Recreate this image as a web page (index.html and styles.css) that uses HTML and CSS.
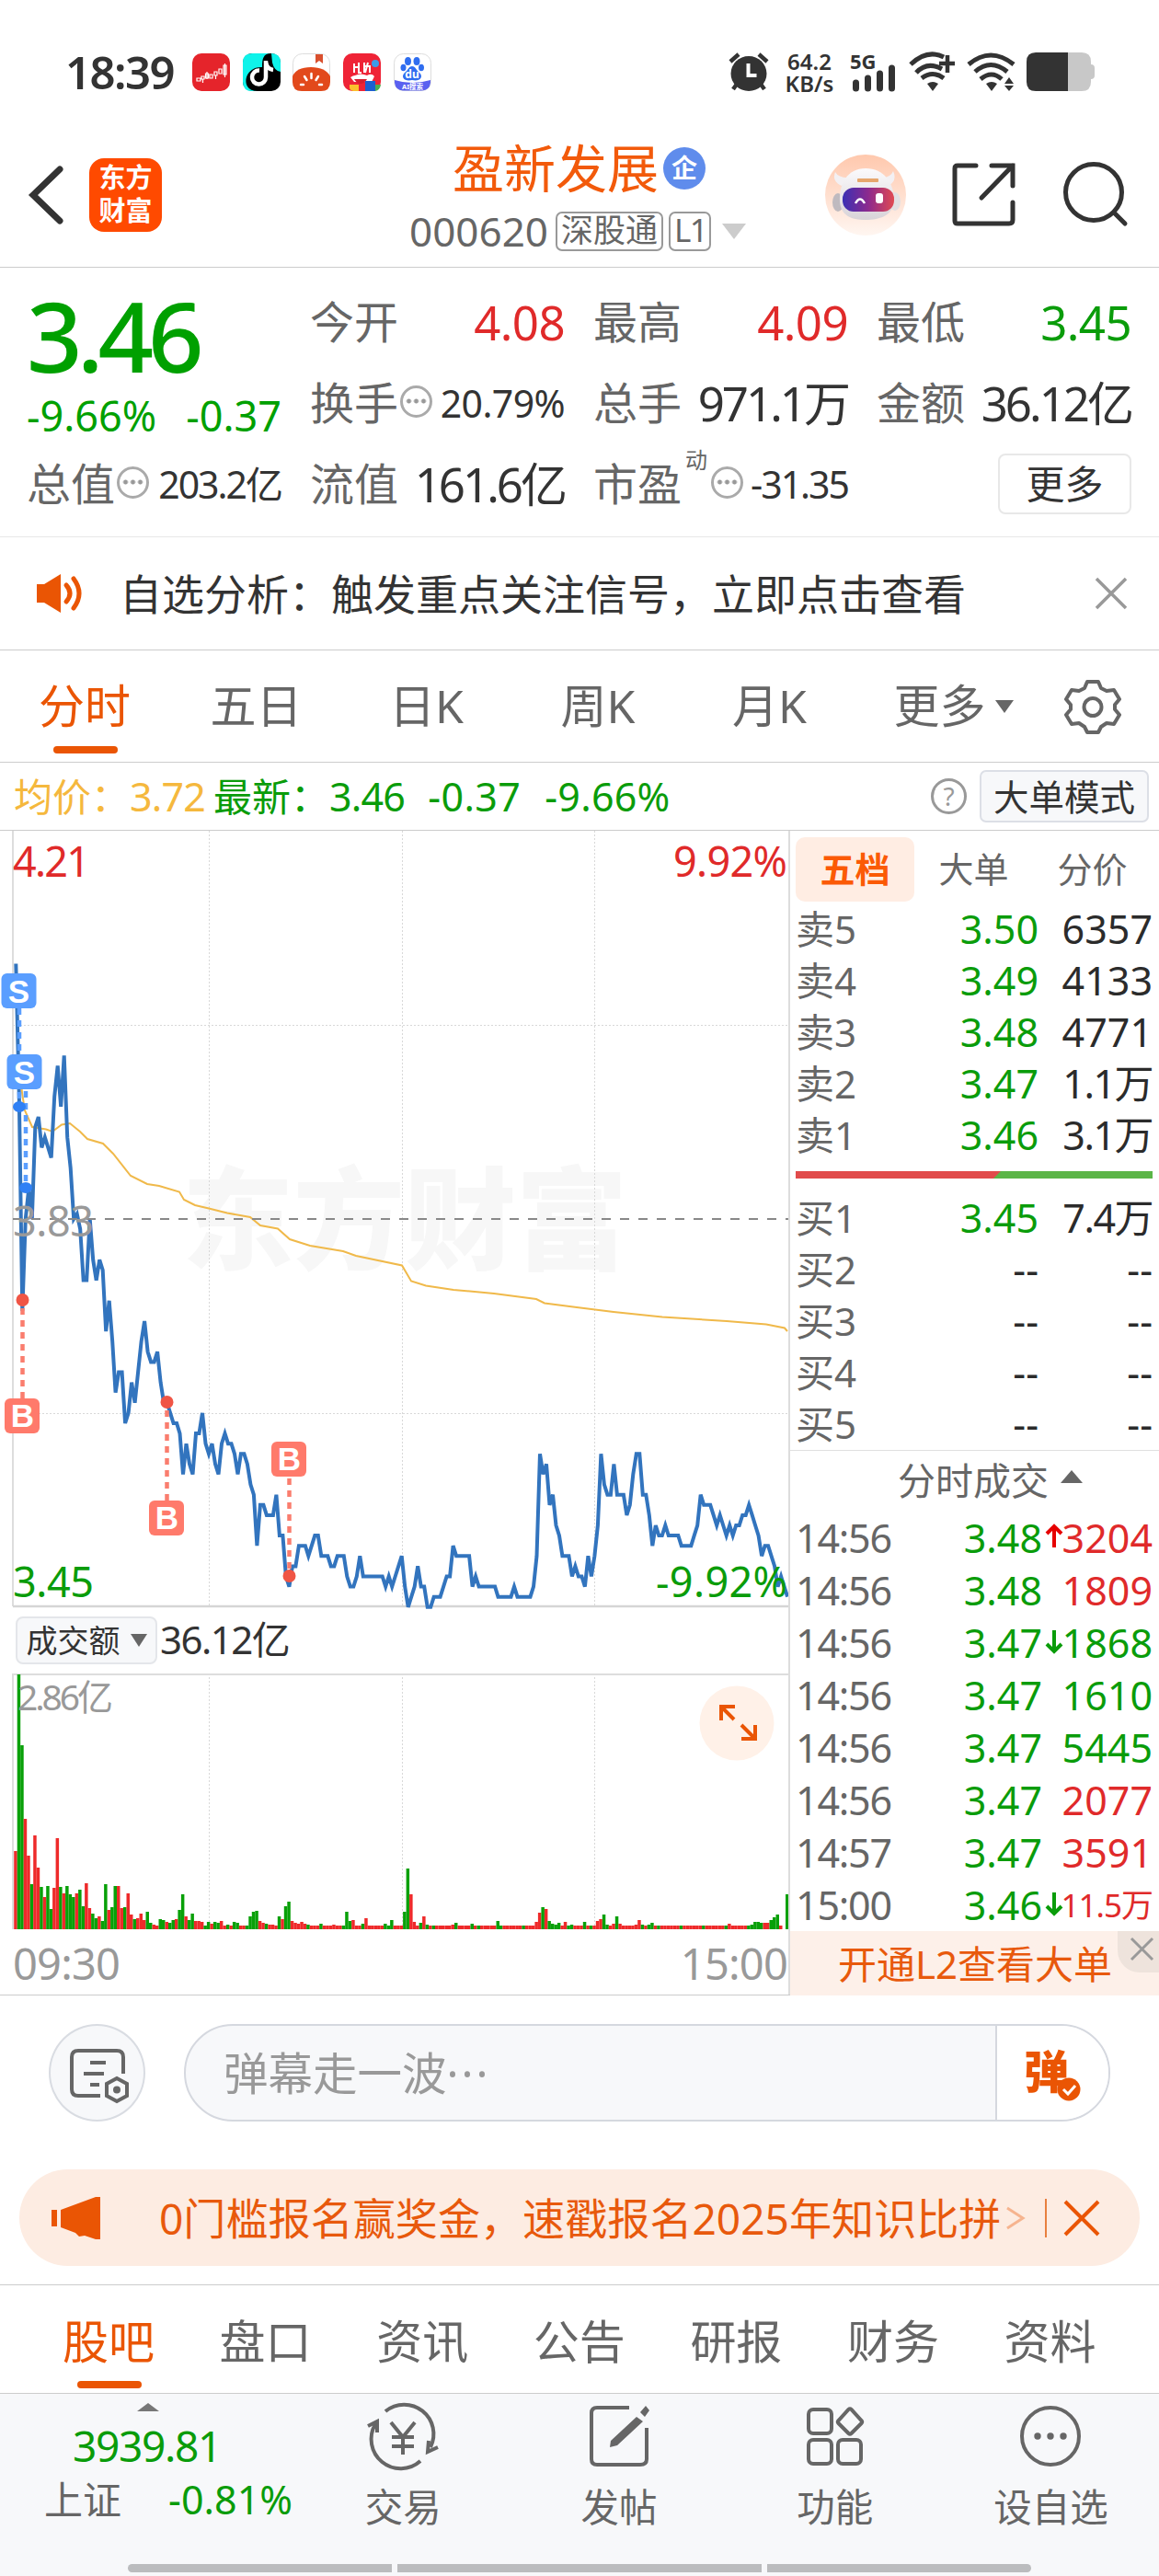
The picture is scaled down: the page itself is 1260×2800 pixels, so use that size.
FILE: index.html
```html
<!DOCTYPE html>
<html lang="zh-CN">

<head>
  <meta charset="UTF-8">
  <meta name="viewport" content="width=device-width, initial-scale=1.0">
  <title>盈新发展 000620</title>
  <link rel="stylesheet" href="styles.css">
</head>

<body>
  <!-- 状态栏 -->
  <div class="status">
    <span class="status_time">18:39</span>
    <div class="status_apps">
      <svg viewBox="0 0 41 41"><rect width="41" height="41" rx="10" fill="#e5242b"/><path d="M5 27h4v3H5zM10 25h3v3h-3zM11.500 28v4M16 20v8M14.500 22h3v5h-3zM19 23h3v4h-3zM24 20h3v4h-3zM25.500 24v4M29 17h3v5h-3zM34 13h3v10h-3zM35.500 11v15" fill="none" stroke="#fff" stroke-width="1.200"/></svg>
      <svg viewBox="0 0 41 41"><rect width="41" height="41" rx="10" fill="#000"/><path d="M10 0h21C22 0 21 6 21 15C8 14 0 26 5 36Q8 41 16 41H10Q0 41 0 31V10Q0 0 10 0zM31 0Q41 0 41 10V20Q34 19 32 10z" fill="#0ff3ea"/><path d="M25 8v18a7.500 7.500 0 1 1-7-7.500M25 9q1 8 8 9" fill="none" stroke="#fff" stroke-width="4.500"/></svg>
      <svg viewBox="0 0 41 41"><rect x=".5" y=".5" width="40" height="40" rx="10" fill="#fff" stroke="#ddd"/><path d="M25 1h8v10l-4-3-4 3z" fill="#d9502e"/><path d="M0 25Q4 15 20 15T41 25V31Q41 41 31 41H10Q0 41 0 31z" fill="#e2491b"/><path d="M20.500 22v5M13 25l2.500 4M28 25l-2.500 4M9 34h3M29 34h3" stroke="#fff" stroke-width="2.500" stroke-linecap="round"/></svg>
      <svg viewBox="0 0 41 41"><rect width="41" height="41" rx="10" fill="#ef2336"/><circle cx="35" cy="11" r="4" fill="#3d9be8"/><path d="M12 11v10M12 15h5M17 10v11h3M23 10v11M22 14h7v7M27 10l-3 11" fill="none" stroke="#fff" stroke-width="2"/><path d="M8 26q3-2 5-2 6-3 13 0 5-3 8 1l-3 6H12z" fill="#fff"/><path d="M12 28h14q-3 5-7 5t-7-5z" fill="#d81e2e"/><path d="M7 34h10v7H11Q7 40 7 37z" fill="#fbc02d"/><path d="M24 30h11v11H24z" fill="#1c5fd0"/><path d="M35 34h6q-1 6-6 7z" fill="#4caf50"/></svg>
      <svg viewBox="0 0 41 41"><rect x=".5" y=".5" width="40" height="40" rx="10" fill="#fff" stroke="#ddd"/><path d="M1 29Q20 35 40 29V32Q39 40 31 40.500H10Q2 40 1 32z" fill="#5a60f0"/><g fill="#2f6df0"><ellipse cx="15.500" cy="8.500" rx="3.500" ry="4.500"/><ellipse cx="25" cy="8.500" rx="3.500" ry="4.500"/><ellipse cx="10.500" cy="15.500" rx="3" ry="3.800"/><ellipse cx="30" cy="15.500" rx="3" ry="3.800"/><path d="M20 14c4 0 4 4 8 7 5 5 0 10-8 8-8 2-13-3-8-8 4-3 4-7 8-7z"/></g><text x="20" y="27" class="du">du</text><text x="20.500" y="38.500" class="du_ai">AI搜索</text></svg>
    </div>
    <div class="status_right">
      <svg class="alarm" viewBox="0 0 44 42"><ellipse cx="22" cy="23" rx="19.500" ry="19" fill="#333"/><path d="M2 10l9-8M42 10l-9-8M5 40l5-7M39 40l-5-7" stroke="#333" stroke-width="4.500"/><path d="M21.500 12v13h9" fill="none" stroke="#fff" stroke-width="4"/></svg>
      <span class="speed">64.2<br>KB/s</span>
      <svg class="signal" viewBox="0 0 52 42"><text x="0" y="18">5G</text><path d="M6.500 33v6M19.500 28v11M32.500 23v16M45.500 17v22" stroke="#333" stroke-width="7" stroke-linecap="round"/></svg>
      <svg class="wifi" viewBox="0 0 51 42"><path d="M2 13Q20-4 38 5M8 22Q20 9 36 18M14 28Q26 19 38 28" fill="none" stroke="#333" stroke-width="5"/><path d="M20 34q6-4 12 0l-6 8z" fill="#333"/><path d="M42 3v19M33 12h17" stroke="#333" stroke-width="4.500"/></svg>
      <svg class="wifi" viewBox="0 0 51 42"><path d="M1 13Q25-7 50 13M8 21Q25 6 43 21M14 29Q26 19 37 29" fill="none" stroke="#333" stroke-width="5"/><path d="M20 34q6-4 12 0l-6 8zM45 27l5 7H40zM45 42l5-6H40z" fill="#333"/></svg>
      <svg class="battery" viewBox="0 0 74 42"><path d="M45 0H60q10 0 10 10v3q4 0 4 4v8q0 4-4 4v3q0 10-10 10H45z" fill="#c8c8c8"/><path d="M45 0v42H10Q0 42 0 32V10Q0 0 10 0z" fill="#333"/></svg>
    </div>
  </div>

  <!-- 标题栏 -->
  <div class="header">
    <svg class="back" viewBox="0 0 38 64"><path d="M34 4L5 32l29 28" fill="none" stroke="#333" stroke-width="7" stroke-linecap="round"/></svg>
    <div class="logo">东方<br>财富</div>
    <div class="title_box">
      <div class="title">盈新发展<span class="qi">企</span></div>
      <div class="code"><span>000620</span><span class="tag">深股通</span><span class="tag tag_l1">L1</span><svg viewBox="0 0 26 17"><path d="M0 0h26L13 17z" fill="#ccc"/></svg></div>
    </div>
    <svg class="robot" viewBox="0 0 88 88">
      <defs>
        <linearGradient id="halo" x1="0" y1="0" x2="0" y2="1"><stop offset="0" stop-color="#ffc8ad"/><stop offset="1" stop-color="#fff6f1"/></linearGradient>
        <linearGradient id="visor"><stop offset="0" stop-color="#3a2fb4"/><stop offset=".5" stop-color="#8d2a8e"/><stop offset="1" stop-color="#e04a52"/></linearGradient>
        <linearGradient id="head" x1="0" y1="0" x2="0" y2="1"><stop offset="0" stop-color="#fbfafc"/><stop offset="1" stop-color="#d8d3d8"/></linearGradient>
      </defs>
      <circle cx="44" cy="44" r="44" fill="url(#halo)"/>
      <ellipse cx="14" cy="52" rx="6" ry="10" fill="#bfbabf"/><ellipse cx="76" cy="51" rx="6" ry="10" fill="#e2dfe2"/>
      <path d="M11 19q-4 10 7 15l9-9q-12 1-16-6zM74 18q5 11-6 16l-9-9q12 1 15-7z" fill="#f3f0f3"/>
      <path d="M44 15c20 0 31 16 31 35-1 16-15 21-31 21S17 66 16 51C15 32 24 15 44 15z" fill="url(#head)"/>
      <rect x="35" y="26" width="23" height="4" rx="1" fill="#e6a66d"/>
      <rect x="19" y="36" width="56" height="26" rx="12" fill="url(#visor)"/>
      <path d="M33 53q5-9 10 0" fill="none" stroke="#fff" stroke-width="2.500"/><rect x="55" y="42" width="8" height="11" rx="3" fill="#fff"/>
    </svg>
    <svg class="share" viewBox="0 0 69 69"><path d="M26 3H6Q3 3 3 6V63Q3 66 6 66H62Q66 66 66 62V43M43 3H66V25M66 3L32 38" fill="none" stroke="#333" stroke-width="5" stroke-linecap="round"/></svg>
    <svg class="search" viewBox="0 0 70 70"><circle cx="33" cy="33" r="30.500" fill="none" stroke="#333" stroke-width="5"/><path d="M55 55l12 12" stroke="#333" stroke-width="5" stroke-linecap="round"/></svg>
  </div>

  <!-- 行情 -->
  <div class="quote">
    <div class="price_box">
      <div class="price">3.46</div>
      <div class="change"><span>-9.66%</span><span>-0.37</span></div>
    </div>
    <div class="cell"><span>今开</span><b class="red">4.08</b></div>
    <div class="cell"><span>最高</span><b class="red">4.09</b></div>
    <div class="cell"><span>最低</span><b class="green">3.45</b></div>
    <div class="cell"><span>换手<i class="dots"></i></span><b class="small">20.79%</b></div>
    <div class="cell"><span>总手</span><b class="tight">971.1万</b></div>
    <div class="cell"><span>金额</span><b class="tight">36.12亿</b></div>
    <div class="cell"><span>总值<i class="dots"></i></span><b class="small tight">203.2亿</b></div>
    <div class="cell"><span>流值</span><b class="tight">161.6亿</b></div>
    <div class="cell"><span>市盈<sup>动</sup><i class="dots"></i></span><b class="small tight">-31.35</b></div>
    <div class="cell"><button class="more_btn" type="button">更多</button></div>
  </div>

  <div class="notice">
    <svg class="speaker" viewBox="0 0 50 46"><path d="M0 13h8L26 2v42L8 33H0z" fill="#ea5504"/><path d="M32 14q8 9 0 18M40 7q12 16 0 32" fill="none" stroke="#ea5504" stroke-width="5" stroke-linecap="round"/></svg>
    <span>自选分析：触发重点关注信号，立即点击查看</span>
    <svg class="close" viewBox="0 0 34 34"><path d="M1 1l32 32M33 1L1 33" stroke="#999" stroke-width="3.500"/></svg>
  </div>

  <div class="tabs">
    <a class="active" href="#">分时</a>
    <a href="#">五日</a>
    <a href="#">日K</a>
    <a href="#">周K</a>
    <a href="#">月K</a>
    <a href="#" class="tab_more">更多<svg viewBox="0 0 20 14"><path d="M0 0h20L10 14z" fill="#666"/></svg></a>
    <svg class="gear" viewBox="0 0 60 60"><path d="M24 3h12l3 7 6 3 8-1 6 10-5 6v5l5 6-6 10-8-1-6 4-3 6H24l-3-6-6-4-8 1-6-10 5-6v-5l-5-6 6-10 8 1 6-3z" fill="none" stroke="#666" stroke-width="4" stroke-linejoin="round"/><circle cx="30" cy="30.500" r="9.500" fill="none" stroke="#666" stroke-width="4"/></svg>
  </div>

  <div class="info">
    <span class="avg">均价：<em>3.72</em></span>
    <span class="green">最新：<em>3.46</em></span>
    <em class="green info_diff">-0.37</em>
    <em class="green info_pct">-9.66%</em>
    <span class="help">?</span>
    <button class="mode_btn" type="button">大单模式</button>
  </div>

  <div class="main">
    <div class="left">
      <svg class="chart" viewBox="0 0 857 845">
        <g class="watermark"><text x="198" y="467" textLength="484">东方财富</text></g>
        <path d="M227.500 0V843M437.500 0V843M646.500 0V843M14 211.500H857M14 633.500H857" class="grid"/>
        <path d="M14 0V843" stroke="#ddd" stroke-width="2"/>
        <path d="M14 843H857" stroke="#d5d5d5" stroke-width="2.500"/>
        <polyline class="avg_line" points="21,250 24,285 27,304 35,322 50,324.500 57,327 67,319.500 76,318 87,327 95,335 112,340 123,351 142,375 160,384 173,386 195,392.500 200,401 212,407 227,410.500 247,415.500 272,420 283,429 302,432.500 315,444 337,451 373,457 387,462 437,472.500 447,489.500 463,494.500 493,499 537,503 583,509 592,513.500 627,518 667,523 720,528.500 790,533 833,536.500 853,540.500 856,544"/>
        <polyline class="price_line" id="priceLine"/>
        <path d="M14 422H857" stroke="#888" stroke-width="2" stroke-dasharray="10 10"/>
        <text x="14" y="50" class="red" textLength="84">4.21</text>
        <text x="856" y="50" class="red end" textLength="124">9.92%</text>
        <text x="14" y="441" class="gray" textLength="88">3.83</text>
        <text x="14" y="833" class="green" textLength="88">3.45</text>
        <text x="856" y="833" class="green end" textLength="143">-9.92%</text>
        <!-- 买卖点 -->
        <g class="sell">
          <path d="M21 193V300M28 283V388"/>
          <ellipse cx="21" cy="300" rx="7" ry="6"/><ellipse cx="28" cy="388" rx="7" ry="6"/>
          <rect x="1.500" y="155" width="38" height="38" rx="6"/><text x="20.500" y="187">S</text>
          <rect x="7.500" y="243" width="38" height="38" rx="6"/><text x="26.500" y="275">S</text>
        </g>
        <g class="buy">
          <path d="M24.500 617V510M181.500 728V621M314.500 704V810"/>
          <ellipse cx="24.500" cy="510" rx="7" ry="7"/><ellipse cx="181.500" cy="621" rx="7" ry="7"/><ellipse cx="314.500" cy="810" rx="7" ry="7"/>
          <rect x="5" y="617" width="38" height="38" rx="6"/><text x="24.500" y="648">B</text>
          <rect x="162" y="728" width="38" height="38" rx="6"/><text x="181.500" y="759">B</text>
          <rect x="295" y="664" width="38" height="38" rx="6"/><text x="314.500" y="695">B</text>
        </g>
      </svg>
      <div class="vol_head">
        <button class="vol_btn" type="button">成交额<svg viewBox="0 0 18 14"><path d="M0 0h18L9 14z" fill="#666"/></svg></button>
        <span>36.12亿</span>
      </div>
      <svg class="volume" viewBox="0 0 857 279">
        <path d="M227.500 0V278M437.500 0V278M646.500 0V278" class="grid"/>
        <path d="M14 278V1H857" fill="none" stroke="#ddd" stroke-width="2"/>
        <g id="bars"></g>
        <text x="19" y="40" textLength="104">2.86亿</text>
        <circle cx="801" cy="54" r="40.500" fill="#fff1e8"/>
        <path d="M784 51V36H799M784 36L798 50M821 56V71H806M821 71L806 56" fill="none" stroke="#ea5504" stroke-width="4"/>
      </svg>
      <div class="axis"><span>09:30</span><span>15:00</span></div>
    </div>

    <div class="right">
      <div class="sub_tabs">
        <a class="active" href="#">五档</a>
        <a href="#">大单</a>
        <a href="#">分价</a>
      </div>
      <div class="orders">
        <div class="row"><span>卖5</span><span class="green">3.50</span><span>6357</span></div>
        <div class="row"><span>卖4</span><span class="green">3.49</span><span>4133</span></div>
        <div class="row"><span>卖3</span><span class="green">3.48</span><span>4771</span></div>
        <div class="row"><span>卖2</span><span class="green">3.47</span><span class="wan">1.1万</span></div>
        <div class="row"><span>卖1</span><span class="green">3.46</span><span class="wan">3.1万</span></div>
      </div>
      <div class="ratio"></div>
      <div class="orders">
        <div class="row"><span>买1</span><span class="green">3.45</span><span class="wan">7.4万</span></div>
        <div class="row"><span>买2</span><span>--</span><span>--</span></div>
        <div class="row"><span>买3</span><span>--</span><span>--</span></div>
        <div class="row"><span>买4</span><span>--</span><span>--</span></div>
        <div class="row"><span>买5</span><span>--</span><span>--</span></div>
      </div>
      <div class="deal_title">分时成交<svg viewBox="0 0 24 14"><path d="M12 0l12 14H0z" fill="#666"/></svg></div>
      <div class="deals">
        <div class="row"><span>14:56</span><span class="green">3.48</span><svg viewBox="0 0 20 28"><path d="M10 26V3M2 11l8-8 8 8" fill="none" stroke="#e60000" stroke-width="4"/></svg><span class="red">3204</span></div>
        <div class="row"><span>14:56</span><span class="green">3.48</span><span class="red">1809</span></div>
        <div class="row"><span>14:56</span><span class="green">3.47</span><svg viewBox="0 0 20 28"><path d="M10 2v23M2 17l8 8 8-8" fill="none" stroke="#0a9c0a" stroke-width="4"/></svg><span class="green">1868</span></div>
        <div class="row"><span>14:56</span><span class="green">3.47</span><span class="green">1610</span></div>
        <div class="row"><span>14:56</span><span class="green">3.47</span><span class="green">5445</span></div>
        <div class="row"><span>14:56</span><span class="green">3.47</span><span class="red">2077</span></div>
        <div class="row"><span>14:57</span><span class="green">3.47</span><span class="red">3591</span></div>
        <div class="row"><span>15:00</span><span class="green">3.46</span><svg viewBox="0 0 20 28"><path d="M10 2v23M2 17l8 8 8-8" fill="none" stroke="#0a9c0a" stroke-width="4"/></svg><span class="red narrow">11.5万</span></div>
      </div>
      <div class="l2">开通L2查看大单<span class="l2_close"><svg viewBox="0 0 25 25"><path d="M1 1l23 23M24 1L1 24" stroke="#999" stroke-width="3"/></svg></span></div>
    </div>
  </div>

  <!-- 弹幕 -->
  <div class="danmu">
    <span class="danmu_set">
      <svg viewBox="0 0 66 60"><path d="M59 28V10Q59 3 52 3H10Q3 3 3 10V45Q3 52 10 52H34" fill="none" stroke="#666" stroke-width="4"/><path d="M23 16h17M16 28h22M23 40h10" stroke="#666" stroke-width="4"/><path d="M52 33l11 6v13l-11 6-11-6V39z" fill="none" stroke="#666" stroke-width="4"/><circle cx="52" cy="45.500" r="4" fill="#666"/></svg>
    </span>
    <div class="danmu_input">
      <span class="placeholder">弹幕走一波<i>···</i></span>
      <span class="danmu_btn">弹<svg viewBox="0 0 26 26"><circle cx="13" cy="13" r="12.500" fill="#ea5504"/><path d="M7 13l5 5 8-9" fill="none" stroke="#fff" stroke-width="3"/></svg></span>
    </div>
  </div>

  <div class="banner">
    <svg class="horn" viewBox="0 0 54 46"><path d="M0 14h6v18H0zM10 14L48 0h5v46h-5l-12-4-6 1-4-4-16-6z" fill="#ea5504"/></svg>
    <span class="banner_text">0门槛报名赢奖金，速戳报名2025年知识比拼</span>
    <svg class="chevron" viewBox="0 0 20 26"><path d="M1 2l17 11L1 24" fill="none" stroke="#f6b48f" stroke-width="3"/></svg>
    <svg class="banner_close" viewBox="0 0 38 38"><path d="M1 1l36 36M37 1L1 37" stroke="#ea5504" stroke-width="4"/></svg>
  </div>

  <div class="bottom_tabs">
    <a class="active" href="#">股吧</a>
    <a href="#">盘口</a>
    <a href="#">资讯</a>
    <a href="#">公告</a>
    <a href="#">研报</a>
    <a href="#">财务</a>
    <a href="#">资料</a>
  </div>

  <!-- 底部导航 -->
  <div class="nav">
    <div class="index">
      <svg viewBox="0 0 24 9"><path d="M12 0l12 9H0z" fill="#777"/></svg>
      <div class="index_value">3939.81</div>
      <div class="index_row"><span>上证</span><span class="green">-0.81%</span></div>
    </div>
    <a href="#"><svg viewBox="0 0 78 70"><path d="M20 8A32 32 0 0 1 69 47M58 62A32 32 0 0 1 9 22" fill="none" stroke="#666" stroke-width="4"/><path d="M1 24l10-5 0 12M77 47l-11 5 1-12M26 20l13 16 13-16M39 36v19M27 36h24M27 46h24" fill="none" stroke="#666" stroke-width="4"/></svg>交易</a>
    <a href="#"><svg viewBox="0 0 78 70"><path d="M50 4H15Q9 4 9 10V60Q9 66 15 66H62Q69 66 69 60V26" fill="none" stroke="#666" stroke-width="4"/><path d="M62 9l6-7 4 5-5 7zM58 14l7 5-28 26-8 2 1-7z" fill="#666"/></svg>发帖</a>
    <a href="#"><svg viewBox="0 0 78 70"><g fill="none" stroke="#666" stroke-width="4"><rect x="10" y="6" width="25" height="26" rx="5"/><rect x="10" y="39" width="25" height="26" rx="5"/><rect x="42" y="39" width="25" height="26" rx="5"/><path d="M53.500 6q1.500-1.500 3 0l11 12q1.500 1.500 0 3l-11 11q-1.500 1.500-3 0l-11-11q-1.500-1.500 0-3z"/></g></svg>功能</a>
    <a href="#"><svg viewBox="0 0 78 70"><circle cx="39" cy="35" r="31" fill="none" stroke="#666" stroke-width="4"/><g fill="#666"><circle cx="25" cy="35" r="3.700"/><circle cx="39" cy="35" r="3.700"/><circle cx="53" cy="35" r="3.700"/></g></svg>设自选</a>
  </div>
  <div class="home_bar"><i></i><i></i><i></i></div>

  <script src="chart.js"></script>
</body>

</html>
```
FILE: styles.css
```css
/* 基本样式 */
* {
  box-sizing: border-box;
}

body {
  width: 1260px;
  height: 2800px;
  margin: 0;
  overflow: hidden;
  background-color: #fff;
  color: #333;
  font-family: "Noto Sans", "Noto Sans CJK SC", sans-serif;
  font-size: 44px;
}

a {
  color: #666;
  text-decoration: none;
}

b,
em,
i {
  font-weight: normal;
  font-style: normal;
}

svg {
  display: block;
  flex-shrink: 0;
  overflow: visible;
}

button {
  font-family: inherit;
  color: #333;
  padding: 0;
}

.red {
  color: #e02a2a;
  fill: #e02a2a;
}

.green {
  color: #0a9c0a;
  fill: #0a9c0a;
}

.gray {
  fill: #999;
}

/* 状态栏 */
.status {
  height: 140px;
  padding: 57px 70px 0 71px;
  display: flex;
}

.status_time {
  width: 138px;
  line-height: 42px;
  font-size: 49px;
  font-weight: 600;
  letter-spacing: -1.5px;
}

.status_apps {
  display: flex;
  gap: 13.7px;
}

.status_apps svg {
  width: 41px;
  height: 41px;
  margin-top: 1px;
}

.du {
  font-size: 12px;
  font-weight: bold;
  fill: #fff;
  text-anchor: middle;
}

.du_ai {
  font-size: 7.5px;
  font-weight: bold;
  fill: #fff;
  text-anchor: middle;
}

.status_right {
  display: flex;
  margin-left: auto;
}

.alarm {
  width: 44px;
  height: 42px;
}

.speed {
  width: 56px;
  margin: -2px 16px 0 16px;
  font-size: 24px;
  line-height: 24px;
  font-weight: 600;
  text-align: center;
  white-space: nowrap;
}

.signal {
  width: 52px;
  height: 42px;
  margin-right: 12px;
}

.signal text {
  font-size: 22px;
  font-weight: bold;
  fill: #333;
}

.wifi {
  width: 51px;
  height: 42px;
  margin-right: 13px;
}

.battery {
  width: 74px;
  height: 42px;
}

/* 标题栏 */
.header {
  height: 151px;
  border-bottom: 1px solid #ccc;
  padding-left: 31px;
  display: flex;
  align-items: flex-start;
}

.back {
  width: 38px;
  height: 64px;
  margin-top: 40px;
}

.logo {
  width: 79px;
  height: 80px;
  margin: 32px 0 0 28px;
  padding-top: 3px;
  border-radius: 16px;
  background-color: #ff4a00;
  color: #fff;
  font-size: 29px;
  line-height: 36px;
  font-weight: bold;
  text-align: center;
}

.title_box {
  width: 560px;
  margin-left: 170px;
  padding-left: 99px;
}

.title {
  display: flex;
  align-items: center;
  margin: 7px 0 0 47px;
  height: 70px;
  line-height: 70px;
  font-size: 56px;
  color: #f25a0b;
}

.qi {
  width: 46px;
  height: 46px;
  margin: 2px 0 0 5px;
  border-radius: 50%;
  background-color: #5f8cec;
  color: #fff;
  font-size: 28px;
  line-height: 44px;
  font-weight: bold;
  text-align: center;
}

.code {
  display: flex;
  align-items: center;
  height: 44px;
  margin-top: 12px;
  line-height: 42px;
  color: #666;
}

.tag {
  height: 43px;
  margin-left: 6px;
  padding: 0 4px;
  border: 2px solid #999;
  border-radius: 7px;
  font-size: 35px;
  line-height: 36px;
}

.code .tag_l1 {
  width: 46px;
  letter-spacing: -1.5px;
}

.code span:first-child {
  width: 153px;
}

.code svg {
  width: 26px;
  margin-left: 12px;
}

.robot {
  width: 88px;
  height: 88px;
  margin: 28px 0 0 -9px;
}

.share {
  width: 69px;
  height: 69px;
  margin: 37px 0 0 50px;
}

.search {
  width: 70px;
  height: 70px;
  margin: 36px 0 0 52px;
}

/* 行情 */
.quote {
  height: 293px;
  padding: 15px 28px 0 29px;
  border-bottom: 1px solid #e8e8e8;
  display: grid;
  grid-template-columns: repeat(4, 277px);
  grid-template-rows: repeat(3, 88px);
  column-gap: 31px;
}

.price_box {
  grid-row: span 2;
  color: #00a000;
}

.price {
  margin-top: 3px;
  font-size: 106px;
  line-height: 110px;
  font-weight: 500;
  letter-spacing: -6px;
}

.change {
  display: flex;
  justify-content: space-between;
  margin-top: 3px;
  font-size: 45px;
  line-height: 60px;
}

.cell {
  display: flex;
  align-items: center;
  justify-content: space-between;
  line-height: 60px;
  white-space: nowrap;
}

.cell span {
  display: flex;
  align-items: center;
  font-size: 48px;
  color: #666;
}

.cell b {
  font-size: 51px;
  letter-spacing: -0.6px;
}

.cell .small {
  font-size: 41px;
}

.cell .tight {
  letter-spacing: -3px;
}

.cell .small.tight {
  letter-spacing: -2px;
}

.cell sup {
  margin: -52px 2px 0 4px;
  font-size: 24px;
  line-height: 24px;
}

.dots {
  width: 35px;
  height: 35px;
  margin: -4px 0 0 2px;
  border: 3px solid #aaa;
  border-radius: 50%;
  background: radial-gradient(circle, #999 2.3px, transparent 2.8px) center / 8px 8px repeat-x;
  background-clip: content-box;
  padding: 0 2px;
}

.more_btn {
  width: 145px;
  height: 66px;
  margin-left: auto;
  border: 2px solid #e8e8e8;
  border-radius: 8px;
  background-color: #fff;
  font-size: 42px;
  line-height: 56px;
}

.notice {
  height: 123px;
  padding: 0 35px 0 40px;
  border-bottom: 1px solid #ccc;
  display: flex;
  align-items: center;
  font-size: 46px;
}

.notice span {
  margin: -4px 0 0 -1px;
}

.speaker {
  width: 50px;
  height: 46px;
  margin-right: 41px;
}

.close {
  width: 34px;
  height: 34px;
  margin-left: auto;
}

/* 周期选项 */
.tabs {
  height: 122px;
  padding-left: 42px;
  border-bottom: 1px solid #ccc;
  display: flex;
  align-items: center;
}

.tabs a {
  width: 186.5px;
  line-height: 121px;
  font-size: 50px;
  white-space: nowrap;
}

.tabs a:nth-child(3),
.tabs a:nth-child(4),
.tabs a:nth-child(5) {
  padding-left: 8px;
}

.tabs .active,
.bottom_tabs .active {
  color: #ea5504;
  display: flex;
  flex-direction: column;
}

.tabs .active::after,
.bottom_tabs .active::after {
  content: "";
  width: 70px;
  height: 8px;
  flex-shrink: 0;
  margin: -17px 0 9px 16px;
  border-radius: 4px;
  background-color: #ea5504;
}

.tabs .tab_more {
  display: flex;
  align-items: center;
  width: 185px;
  margin-left: -3px;
}

.tab_more svg {
  width: 20px;
  margin-left: 10px;
}

.gear {
  width: 60px;
  height: 60px;
  margin-left: 1px;
}

.info {
  height: 74px;
  padding: 0 11px 0 15px;
  border-bottom: 1px solid #ccc;
  display: flex;
  align-items: center;
  font-size: 42px;
  line-height: 60px;
  white-space: nowrap;
}

.info em {
  font-size: 43px;
  letter-spacing: -0.8px;
}

.info .avg {
  width: 217px;
  color: #f5b83d;
}

.info .info_diff {
  margin-left: 25px;
  letter-spacing: 0.4px;
}

.info .info_pct {
  margin-left: 26px;
  letter-spacing: 0.2px;
}

.help {
  width: 39px;
  height: 39px;
  margin-left: auto;
  border: 3px solid #999;
  border-radius: 50%;
  color: #999;
  font-size: 28px;
  line-height: 33px;
  text-align: center;
}

.mode_btn {
  width: 184px;
  height: 57px;
  margin-left: 14px;
  border: 2px solid #dcdfe6;
  border-radius: 7px;
  background-color: #f7f8fa;
  font-size: 38.5px;
  line-height: 50px;
}

/* 走势图 */
.main {
  display: flex;
  height: 1266px;
  border-bottom: 1px solid #ccc;
}

.left {
  width: 857px;
}

.chart {
  width: 857px;
  height: 845px;
}

.chart text {
  font-size: 45px;
}

.chart .end {
  text-anchor: end;
}

.chart .watermark text {
  font-size: 121px;
  font-weight: 900;
  fill: #f7f7f7;
}

.grid {
  fill: none;
  stroke: #d8d8d8;
  stroke-width: 1;
  stroke-dasharray: 2 2;
}

.price_line {
  fill: none;
  stroke: #3274be;
  stroke-width: 4;
}

.avg_line {
  fill: none;
  stroke: #f0b94a;
  stroke-width: 2;
}

.sell path,
.buy path {
  fill: none;
  stroke-width: 4.5;
  stroke-dasharray: 7 6;
}

.sell path {
  stroke: #5a9eff;
}

.buy path {
  stroke: #fa7d6e;
}

.sell ellipse {
  fill: #2f80f5;
}

.buy ellipse {
  fill: #f05545;
}

.sell rect {
  fill: #5a9eff;
}

.buy rect {
  fill: #ff7a6b;
}

.sell text,
.buy text {
  font-family: "Liberation Sans", Arial, sans-serif;
  font-size: 35px;
  font-weight: bold;
  text-anchor: middle;
  fill: #fff;
}

.vol_head {
  height: 71px;
  padding: 9px 0 0 17px;
  display: flex;
  font-size: 42px;
  line-height: 50px;
}

.vol_head span {
  margin-left: 3px;
  letter-spacing: -1.5px;
}

.vol_btn {
  width: 154px;
  height: 52px;
  display: flex;
  align-items: center;
  justify-content: center;
  border: 2px solid #e4e6ea;
  border-radius: 8px;
  background-color: #f7f8fa;
  font-size: 34px;
  line-height: 46px;
}

.vol_btn svg {
  width: 18px;
  margin-left: 11px;
}

.volume {
  width: 857px;
  height: 279px;
}

.volume text {
  font-size: 39px;
  fill: #999;
}

.up {
  fill: #ee2a2a;
}

.down {
  fill: #08a008;
}

.axis {
  display: flex;
  justify-content: space-between;
  padding: 0 1px 0 14px;
  font-size: 47px;
  line-height: 72px;
  letter-spacing: -0.8px;
  color: #999;
}

/* 盘口 */
.right {
  width: 403px;
  border-left: 2px solid #ddd;
  color: #2b2b2b;
}

.sub_tabs {
  display: flex;
  padding: 7px 6px 0;
}

.sub_tabs a {
  width: 129px;
  height: 70px;
  line-height: 68px;
  font-size: 38px;
  text-align: center;
}

.sub_tabs .active {
  border-radius: 10px;
  background-color: #ffede3;
  color: #fb5a05;
  font-weight: bold;
}

.row {
  display: flex;
  position: relative;
  padding: 0 7px 0 6px;
  height: 56px;
  line-height: 56px;
  font-size: 43px;
}

.row span {
  width: 127px;
  text-align: right;
  white-space: nowrap;
}

.row span:first-child {
  width: 137px;
  text-align: left;
  color: #666;
}

.row span:last-child {
  width: auto;
  margin-left: auto;
}

.row .wan {
  letter-spacing: -1.5px;
}

.orders .row span:first-child {
  font-size: 42px;
}

.orders:nth-child(2) {
  padding-top: 2px;
}

.orders:nth-child(4) {
  padding-top: 15px;
  height: 295px;
}

.ratio {
  height: 8px;
  margin: 11px 7px 0 6px;
  background: linear-gradient(135deg, #e14b4b 56.2%, #5bb547 56.4%);
}

.deal_title {
  height: 68px;
  border-top: 1px solid #e0e0e0;
  padding: 0 0 4px 117px;
  display: flex;
  align-items: center;
  font-size: 41px;
  line-height: 60px;
  color: #666;
}

.deal_title svg {
  width: 24px;
  margin: -7px 0 0 13px;
}

.deals .row {
  height: 57px;
  line-height: 56px;
}

.deals .row span:first-child {
  letter-spacing: -1.2px;
}

.deals .row span:nth-child(2) {
  width: 131px;
}

.deals .row svg {
  position: absolute;
  left: 277px;
  top: 12px;
  width: 20px;
  height: 28px;
}

.deals .row .narrow {
  font-size: 35px;
  letter-spacing: -1px;
}

.l2 {
  height: 70px;
  position: relative;
  margin-top: -1px;
  padding-left: 52px;
  background-color: #fdf0e9;
  color: #e8590c;
  font-size: 42px;
  line-height: 71px;
}

.l2_close {
  position: absolute;
  top: 0;
  right: 0;
  width: 45px;
  height: 45px;
  padding: 7px 0 0 14px;
  border-bottom-left-radius: 24px;
  background-color: #eee3dc;
}

.l2_close svg {
  width: 25px;
}

/* 弹幕 */
.danmu {
  display: flex;
  padding: 31px 53px 0;
  gap: 42px;
}

.danmu_set {
  width: 105px;
  height: 106px;
  padding: 24px 0 0 20px;
  border: 2px solid #d9dce2;
  border-radius: 50%;
  background-color: #f7f8fa;
}

.danmu_set svg {
  width: 66px;
  height: 60px;
}

.danmu_input {
  width: 1007px;
  height: 106px;
  display: flex;
  overflow: hidden;
  border: 2px solid #d5d8df;
  border-radius: 53px;
  background-color: #f7f8fa;
  line-height: 102px;
}

.placeholder {
  width: 880px;
  padding-left: 41px;
  font-size: 48.5px;
  color: #999;
}

.placeholder i {
  letter-spacing: 3px;
}

.danmu_btn {
  flex: 1;
  display: flex;
  padding-left: 29px;
  border-left: 2px solid #d5d8df;
  background-color: #fff;
  color: #ea5504;
  font-size: 49px;
  line-height: 98px;
  font-weight: 900;
}

.danmu_btn svg {
  width: 26px;
  height: 26px;
  margin: 56px 0 0 -13px;
}

.banner {
  height: 105px;
  margin: 52px 21px 0;
  padding: 0 44px 0 35px;
  border-radius: 53px;
  background-color: #fdece2;
  color: #e8590c;
  display: flex;
  align-items: center;
  font-size: 46.1px;
}

.horn {
  width: 54px;
  height: 46px;
}

.banner_text {
  margin: -3px 0 0 63px;
  white-space: nowrap;
}

.chevron {
  width: 20px;
  height: 26px;
  margin-left: 6px;
}

.banner_close {
  width: 38px;
  height: 38px;
  box-sizing: content-box;
  margin-left: auto;
  padding: 2px 0 2px 19px;
  border-left: 2px solid #e8803f;
}

.bottom_tabs {
  height: 119px;
  margin-top: 20px;
  padding: 0 32px;
  border-top: 1px solid #ccc;
  border-bottom: 1px solid #ccc;
  display: flex;
}

.bottom_tabs a {
  width: 170.6px;
  padding-left: 36px;
  line-height: 123px;
  font-size: 50px;
}

.bottom_tabs .active::after {
  margin-top: -19px;
  margin-left: 16px;
}

/* 底部导航 */
.nav {
  display: flex;
  height: 185px;
  background-color: #f7f8fa;
}

.nav a {
  width: 234.7px;
  padding-top: 11px;
  display: flex;
  flex-direction: column;
  align-items: center;
  font-size: 41.5px;
  line-height: 60px;
}

.nav a svg {
  width: 78px;
  height: 70px;
  margin-bottom: 12px;
}

.nav .index {
  flex-shrink: 0;
  width: 321px;
  padding-top: 10px;
  color: #666;
}

.index svg {
  width: 24px;
  margin-left: 149px;
}

.index_value {
  margin: 8px 0 0 79px;
  color: #0a9c0a;
  font-size: 46px;
  line-height: 58px;
  letter-spacing: -1.3px;
}

.index_row {
  display: flex;
  justify-content: space-between;
  padding: 0 3px 0 48px;
  font-size: 42px;
  line-height: 60px;
}

.index_row .green {
  font-size: 43px;
}

.home_bar {
  height: 14px;
  display: flex;
  gap: 6px;
  padding: 0 139px;
  background-color: #f7f8fa;
}

.home_bar i {
  width: 287px;
  height: 9px;
  background-color: #bbbcbe;
}

.home_bar i:nth-child(2) {
  flex: 1;
}

.home_bar i:first-child {
  border-radius: 5px 0 0 5px;
}

.home_bar i:last-child {
  border-radius: 0 5px 5px 0;
}
```
FILE: chart.js
```js
// 每分钟价格（分）
let prices = [
  408, 395, 374, 383, 386, 383, 392, 393, 390, 391, 390, 389, 395, 398, 394, 399, 391, 388, 383, 383.5,
  382, 377, 377, 383, 379, 377, 379, 378, 372, 375, 371, 366, 368, 368, 363, 364, 367, 365, 368, 371,
  373, 370, 369, 369, 370, 367, 365, 365, 364, 363, 363, 362, 358, 361, 359, 358, 362, 362, 364, 361,
  360, 361, 359, 358, 361, 362, 361, 361, 360, 358, 360, 360, 359, 357, 356, 351, 355, 355, 354, 354,
  354, 356, 352, 352, 348, 347, 349, 349, 351, 351, 351, 350, 351, 352, 352, 350, 350, 350, 349, 349,
  350, 350, 350, 348, 347, 347, 348, 350, 348, 348, 348, 348, 348, 348, 348, 347, 348, 347, 348, 349,
  350, 347, 345, 346, 347, 349, 347, 347, 345, 345, 346, 346, 346, 347, 348, 348, 351, 350, 350, 350,
  350, 350, 347, 348, 347, 347, 347, 347, 347, 347, 346, 346, 346, 346, 346, 347, 346, 346, 346, 346,
  346, 347, 350, 360, 358, 359, 355, 356, 353, 352, 350, 350, 350, 348, 349, 348, 348, 347, 350, 348,
  350, 353, 360, 357, 356, 356, 359, 356, 356, 356, 354, 355, 358, 360, 360, 356, 356, 354, 351, 353,
  352, 352, 353, 352, 352, 352, 352, 351, 351, 351, 351, 352, 353, 356, 355, 355, 355, 354, 353, 354,
  353, 352, 353, 352, 353, 353, 354, 354, 355, 354, 353, 352, 350, 351, 351, 350, 349, 347, 348, 347, 346
];

let points = prices.map((p, i) => (17.3 + i * 3.495).toFixed(1) + "," + (422 - (p - 383) * 11.1).toFixed(1));
document.getElementById("priceLine").setAttribute("points", points.join(" "));

// 成交额柱：前 93 分钟逐根，之后只列出较高的
let head = "85r 277g 200g 120r 80r 49g 102r 67r 46g 35r 47g 22g 45r 99r 46g 39r 47g 38g 35g 39r 43g 25g 50r 23r 17g 12g 14r 9g 49g 21r 24g 47g 47r 23r 24g 39r 16r 11g 12r 17r 10r 19g 7g 5r 4r 11g 10g 8r 7g 10g 11r 21g 38g 14r 10g 17g 9r 9r 8r 4g 8g 6r 8g 7g 9r 4r 5g 4r 8g 7g 4r 4r 4g 14g 19g 20g 9r 7r 6g 5r 5r 4r 14g 11r 25g 30g 9r 7r 6r 8r 6r 5g 4r".split(" ");
let peaks = {
  95: "6g", 99: "5r", 103: "19g", 104: "9g", 105: "10r", 108: "6g", 109: "12r", 115: "6g", 117: "10g",
  121: "19g", 122: "66g", 123: "38r", 124: "8r", 126: "7g", 127: "14r", 128: "5g", 136: "5r", 137: "7g", 142: "6g",
  150: "9g", 162: "8r", 163: "18r", 164: "24g", 165: "22r", 166: "9g", 167: "6g", 168: "5g", 169: "7g",
  171: "8r", 173: "5g", 177: "8g", 181: "9r", 182: "11r", 183: "16g", 184: "5g", 186: "6r", 187: "14g",
  188: "6r", 193: "5r", 194: "10r", 195: "5g", 197: "5g", 198: "7g", 222: "6r", 229: "5g", 230: "8g",
  231: "8g", 232: "7g", 233: "7r", 234: "7r", 235: "10g", 236: "13g", 237: "16g", 238: "4r", 239: "0r", 240: "38g"
};

let bars = "";
for (let i = 0; i <= 240; i++) {
  let item = head[i] || peaks[i] || (i % 7 == 4 ? "4g" : "4r");
  let h = parseInt(item);
  let cls = item.endsWith("g") ? "down" : "up";
  bars += `<rect class="${cls}" x="${(15.2 + i * 3.495).toFixed(1)}" y="${278 - h}" width="3.5" height="${h}"/>`;
}
document.getElementById("bars").innerHTML = bars;
```
